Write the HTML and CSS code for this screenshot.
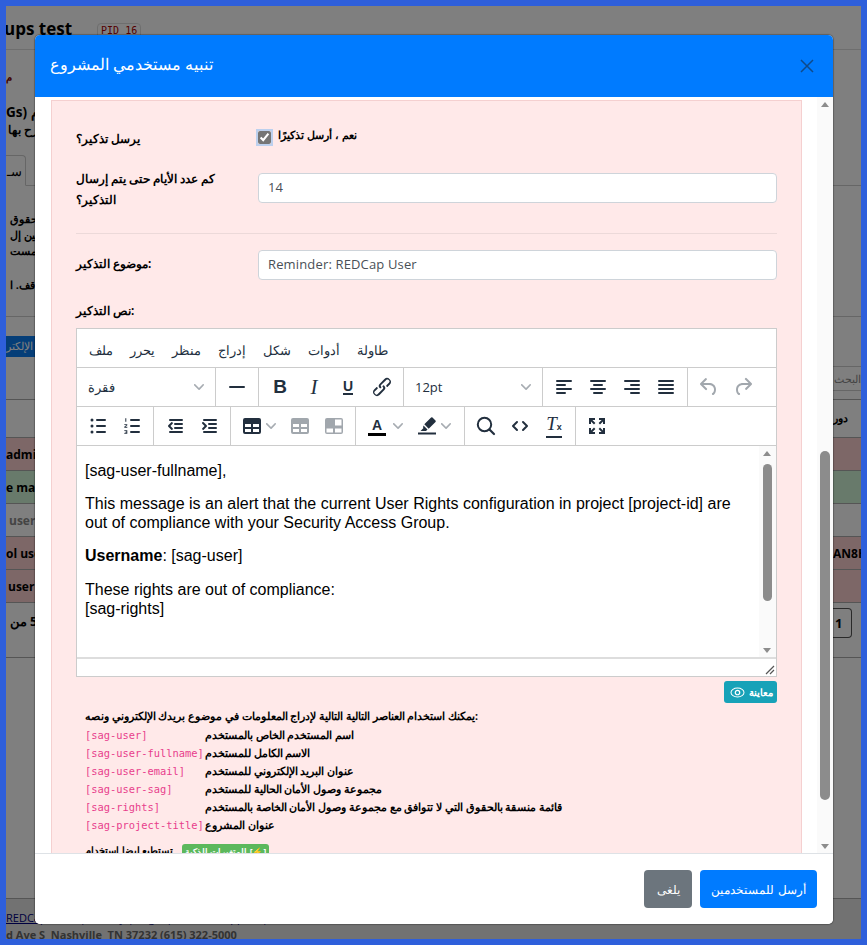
FILE: index.html
```html
<!DOCTYPE html>
<html lang="ar">
<head>
    <meta charset="UTF-8">
    <meta name="viewport" content="width=device-width, initial-scale=1.0">
    <title>Project user alert</title>
    <link rel="stylesheet" href="styles.css">
</head>
<body>
<div class="frame" dir="ltr">
    <div class="page">
        <div class="page-title"><h2>ups test</h2><span class="pid">PID 16</span></div>
        <div class="page-intro">
            <div class="mark">م</div>
            <div class="intro-head">Gs) م</div>
            <div class="intro-line">رح بها</div>
            <div class="tab">سـ</div>
        </div>
        <div class="page-desc">
            <p>حقوق</p>
            <p>مين إل</p>
            <p>للمست</p>
            <p class="desc-last">اقف. ا</p>
        </div>
        <div class="page-tools">
            <span class="mail-btn">يد الإلكتر</span>
            <span class="search-box">البحث</span>
        </div>
        <div class="grid-row grid-head"><span></span><span class="role">دور</span></div>
        <div class="grid-row row-red"><span class="cell">admin</span><span></span></div>
        <div class="grid-row row-green"><span class="cell">e man</span><span></span></div>
        <div class="grid-row"><span class="cell cell-muted">user</span><span></span></div>
        <div class="grid-row row-red"><span class="cell">ol user</span><span class="cell">AN8H</span></div>
        <div class="grid-row row-red"><span class="cell cell-in">user</span><span></span></div>
        <div class="pager"><span class="pager-count"><span>من</span><span>5</span></span><span class="pager-btn">1</span></div>
        <div class="page-footer">
            <div class="footer-links"><u>REDCap Tools</u> | <u>Privacy</u> | <u>Legal</u> | <u>Contact Support</u> | <u>About</u></div>
            <div class="footer-addr">d Ave S  Nashville  TN 37232 (615) 322-5000</div>
        </div>
    </div>

    <div class="backdrop"></div>

    <div class="modal">
        <div class="modal-header">
            <h5>تنبيه مستخدمي المشروع</h5>
            <svg class="close" width="14" height="14" viewBox="0 0 14 14"><path d="M1 1l12 12M13 1L1 13" stroke="#0f4a8a" stroke-width="1.5" fill="none"/></svg>
        </div>
        <div class="modal-body">
            <div class="panel">
                <div class="form-row row-check">
                    <label class="lbl">يرسل تذكير؟</label>
                    <div class="check-wrap"><input type="checkbox" checked><span>نعم ، أرسل تذكيرًا</span></div>
                </div>
                <div class="form-row row-days">
                    <label class="lbl lbl-two">كم عدد الأيام حتى يتم إرسال التذكير؟</label>
                    <input class="field" type="text" value="14">
                </div>
                <hr class="sep">
                <div class="form-row row-subject">
                    <label class="lbl">موضوع التذكير:</label>
                    <input class="field" type="text" value="Reminder: REDCap User">
                </div>
                <div class="lbl lbl-body">نص التذكير:</div>

                <div class="editor">
                    <div class="menubar">
                        <span>ملف</span><span>يحرر</span><span>منظر</span><span>إدراج</span><span>شكل</span><span>أدوات</span><span>طاولة</span>
                    </div>
                    <div class="toolbar">
                        <div class="tgroup"><div class="select select-block"><span>فقرة</span><svg class="chev" width="10" height="10" viewBox="0 0 10 10"><use href="#i-chev"/></svg></div></div>
                        <div class="tgroup"><div class="tbtn"><svg width="24" height="24" viewBox="0 0 24 24"><rect x="4" y="11" width="16" height="2" rx="1"/></svg></div></div>
                        <div class="tgroup">
                            <div class="tbtn"><span class="g-bold">B</span></div>
                            <div class="tbtn"><span class="g-italic">I</span></div>
                            <div class="tbtn"><span class="g-under">U</span></div>
                            <div class="tbtn"><svg width="24" height="24" viewBox="0 0 24 24"><path d="M6.2 12.3a1 1 0 0 1 1.4 1.4l-2.1 2a2 2 0 1 0 2.7 2.8l4.8-4.8a1 1 0 0 0 0-1.4 1 1 0 1 1 1.4-1.3 2.9 2.9 0 0 1 0 4L9.6 20a3.9 3.9 0 0 1-5.5-5.5l2-2zm11.6-.6a1 1 0 0 1-1.4-1.4l2-2a2 2 0 1 0-2.6-2.8L11 10a1 1 0 0 0 0 1.4A1 1 0 1 1 9.6 13a2.9 2.9 0 0 1 0-4L14.4 4a3.9 3.9 0 0 1 5.5 5.5l-2 2z"/></svg></div>
                        </div>
                        <div class="tgroup"><div class="select select-size"><span>12pt</span><svg class="chev" width="10" height="10" viewBox="0 0 10 10"><use href="#i-chev"/></svg></div></div>
                        <div class="tgroup">
                            <div class="tbtn"><svg width="24" height="24" viewBox="0 0 24 24"><path d="M5 5h14a1 1 0 0 1 0 2H5a1 1 0 1 1 0-2zm0 4h8a1 1 0 0 1 0 2H5a1 1 0 1 1 0-2zm0 8h8a1 1 0 0 1 0 2H5a1 1 0 0 1 0-2zm0-4h14a1 1 0 0 1 0 2H5a1 1 0 0 1 0-2z"/></svg></div>
                            <div class="tbtn"><svg width="24" height="24" viewBox="0 0 24 24"><path d="M5 5h14a1 1 0 0 1 0 2H5a1 1 0 1 1 0-2zm3 4h8a1 1 0 0 1 0 2H8a1 1 0 1 1 0-2zm0 8h8a1 1 0 0 1 0 2H8a1 1 0 0 1 0-2zm-3-4h14a1 1 0 0 1 0 2H5a1 1 0 0 1 0-2z"/></svg></div>
                            <div class="tbtn"><svg width="24" height="24" viewBox="0 0 24 24"><path d="M5 5h14a1 1 0 0 1 0 2H5a1 1 0 1 1 0-2zm6 4h8a1 1 0 0 1 0 2h-8a1 1 0 0 1 0-2zm0 8h8a1 1 0 0 1 0 2h-8a1 1 0 0 1 0-2zm-6-4h14a1 1 0 0 1 0 2H5a1 1 0 0 1 0-2z"/></svg></div>
                            <div class="tbtn"><svg width="24" height="24" viewBox="0 0 24 24"><path d="M5 5h14a1 1 0 0 1 0 2H5a1 1 0 1 1 0-2zm0 4h14a1 1 0 0 1 0 2H5a1 1 0 1 1 0-2zm0 4h14a1 1 0 0 1 0 2H5a1 1 0 0 1 0-2zm0 4h14a1 1 0 0 1 0 2H5a1 1 0 0 1 0-2z"/></svg></div>
                        </div>
                        <div class="tgroup tgroup-last">
                            <div class="tbtn off"><svg width="24" height="24" viewBox="0 0 24 24"><path d="M6.4 8H12c3.7 0 6.2 2 6.8 5.1.6 2.7-.4 5.6-2.3 6.8a1 1 0 0 1-1-1.8c1.1-.6 1.8-2.7 1.4-4.6-.5-2.1-2.1-3.5-4.9-3.5H6.4l3.3 3.3a1 1 0 1 1-1.4 1.4l-5-5a1 1 0 0 1 0-1.4l5-5a1 1 0 0 1 1.4 1.4L6.4 8z"/></svg></div>
                            <div class="tbtn off"><svg width="24" height="24" viewBox="0 0 24 24"><path d="M17.6 10H12c-2.8 0-4.4 1.4-4.9 3.5-.4 2 .3 4 1.4 4.6a1 1 0 1 1-1 1.8c-2-1.2-2.9-4.1-2.3-6.8.6-3 3-5.1 6.8-5.1h5.6l-3.3-3.3a1 1 0 1 1 1.4-1.4l5 5a1 1 0 0 1 0 1.4l-5 5a1 1 0 0 1-1.4-1.4l3.3-3.3z"/></svg></div>
                        </div>
                    </div>
                    <div class="toolbar">
                        <div class="tgroup">
                            <div class="tbtn"><svg width="24" height="24" viewBox="0 0 24 24"><path d="M11 5h8a1 1 0 0 1 0 2h-8a1 1 0 0 1 0-2zm0 6h8a1 1 0 0 1 0 2h-8a1 1 0 0 1 0-2zm0 6h8a1 1 0 0 1 0 2h-8a1 1 0 0 1 0-2z"/><circle cx="6" cy="6" r="1.5"/><circle cx="6" cy="12" r="1.5"/><circle cx="6" cy="18" r="1.5"/></svg></div>
                            <div class="tbtn"><svg width="24" height="24" viewBox="0 0 24 24"><path d="M11 5h8a1 1 0 0 1 0 2h-8a1 1 0 0 1 0-2zm0 6h8a1 1 0 0 1 0 2h-8a1 1 0 0 1 0-2zm0 6h8a1 1 0 0 1 0 2h-8a1 1 0 0 1 0-2z"/><path d="M5.3 4.2h1v3.6h-1zM4.3 10.200h3v1l-2 1.600h2v.9h-3v-1l2-1.600h-2zM4.300 16.200h3v3.600h-3v-.9h2v-.5h-1.500v-.7h1.500v-.6h-2z"/></svg></div>
                        </div>
                        <div class="tgroup">
                            <div class="tbtn"><svg width="24" height="24" viewBox="0 0 24 24"><path d="M7 5h12a1 1 0 0 1 0 2H7a1 1 0 1 1 0-2zm5 4h7a1 1 0 0 1 0 2h-7a1 1 0 0 1 0-2zm0 4h7a1 1 0 0 1 0 2h-7a1 1 0 0 1 0-2zm-5 4h12a1 1 0 0 1 0 2H7a1 1 0 0 1 0-2zM8.300 8.300a1 1 0 0 1 1.400 1.400L7.400 12l2.300 2.300a1 1 0 0 1-1.400 1.400l-3-3a1 1 0 0 1 0-1.400l3-3z"/></svg></div>
                            <div class="tbtn"><svg width="24" height="24" viewBox="0 0 24 24"><path d="M7 5h12a1 1 0 0 1 0 2H7a1 1 0 1 1 0-2zm5 4h7a1 1 0 0 1 0 2h-7a1 1 0 0 1 0-2zm0 4h7a1 1 0 0 1 0 2h-7a1 1 0 0 1 0-2zm-5 4h12a1 1 0 0 1 0 2H7a1 1 0 0 1 0-2zM5.300 8.300a1 1 0 0 1 1.400 0l3 3a1 1 0 0 1 0 1.400l-3 3a1 1 0 0 1-1.400-1.400L7.600 12 5.300 9.700a1 1 0 0 1 0-1.400z"/></svg></div>
                        </div>
                        <div class="tgroup">
                            <div class="tbtn tbtn-split"><svg width="24" height="24" viewBox="0 0 24 24"><path fill-rule="evenodd" d="M5 4h14a2 2 0 0 1 2 2v12a2 2 0 0 1-2 2H5a2 2 0 0 1-2-2V6a2 2 0 0 1 2-2zm0 6v3h6v-3H5zm8 0v3h6v-3h-6zm-8 5v3h6v-3H5zm8 0v3h6v-3h-6z"/></svg><svg class="chev" width="10" height="10" viewBox="0 0 10 10"><use href="#i-chev"/></svg></div>
                            <div class="tbtn off"><svg width="24" height="24" viewBox="0 0 24 24"><path fill-rule="evenodd" d="M5 4h14a2 2 0 0 1 2 2v12a2 2 0 0 1-2 2H5a2 2 0 0 1-2-2V6a2 2 0 0 1 2-2zm0 6v3h6v-3H5zm8 0v3h6v-3h-6zm-8 5v3h6v-3H5zm8 0v3h6v-3h-6z"/></svg></div>
                            <div class="tbtn off"><svg width="24" height="24" viewBox="0 0 24 24"><path fill-rule="evenodd" d="M5 4h14a2 2 0 0 1 2 2v12a2 2 0 0 1-2 2H5a2 2 0 0 1-2-2V6a2 2 0 0 1 2-2zm8 1.500v6h6.500v-6H13zm-8.500 9v4h6.500v-4H4.500zm8.500 0v4h6.500v-4H13z"/></svg></div>
                        </div>
                        <div class="tgroup">
                            <div class="tbtn tbtn-split tbtn-color"><span class="g-color">A</span><svg class="chev" width="10" height="10" viewBox="0 0 10 10"><use href="#i-chev"/></svg></div>
                            <div class="tbtn tbtn-split tbtn-color"><svg width="24" height="24" viewBox="0 0 24 24"><path d="M17.500 3.500l3 3a1 1 0 0 1 0 1.400l-6.800 6.800-4.400-4.400 6.800-6.800a1 1 0 0 1 1.400 0zM8.500 11.500l4 4-1.500 1.500H5.500l3-3-.5-.5z"/><rect x="3" y="18.500" width="18" height="2"/></svg><svg class="chev" width="10" height="10" viewBox="0 0 10 10"><use href="#i-chev"/></svg></div>
                        </div>
                        <div class="tgroup">
                            <div class="tbtn"><svg width="24" height="24" viewBox="0 0 24 24"><circle cx="10.500" cy="10.500" r="6.700" fill="none" stroke="#222f3e" stroke-width="2"/><path d="M15.500 15.500L20 20" stroke="#222f3e" stroke-width="2.200" stroke-linecap="round"/></svg></div>
                            <div class="tbtn"><svg width="24" height="24" viewBox="0 0 24 24"><path d="M9 8l-4 4 4 4M15 8l4 4-4 4" fill="none" stroke="#222f3e" stroke-width="2" stroke-linecap="round" stroke-linejoin="round"/></svg></div>
                            <div class="tbtn"><span class="g-clear">T<small>x</small></span></div>
                        </div>
                        <div class="tgroup tgroup-last">
                            <div class="tbtn"><svg width="24" height="24" viewBox="0 0 24 24"><path d="M4 4h6v2H7.400l3 3L9 10.400l-3-3V10H4zM14 4h6v6h-2V7.400l-3 3L13.600 9l3-3H14zM4 14h2v2.600l3-3 1.400 1.400-3 3H10v2H4zM13.600 15l1.400-1.400 3 3V14h2v6h-6v-2h2.600z"/></svg></div>
                        </div>
                    </div>
                    <div class="edit-area">
                        <p>[sag-user-fullname],</p>
                        <p>This message is an alert that the current User Rights configuration in project [project-id] are out of compliance with your Security Access Group.</p>
                        <p><b>Username</b>: [sag-user]</p>
                        <p>These rights are out of compliance:<br>[sag-rights]</p>
                        <div class="mini-bar">
                            <i class="arrow-up"></i>
                            <div class="mini-thumb"></div>
                            <i class="arrow-down"></i>
                        </div>
                    </div>
                    <div class="statusbar">
                        <svg width="10" height="10" viewBox="0 0 10 10"><path d="M9 1L1 9M9 5L5 9" stroke="#555" stroke-width="1.200" fill="none"/></svg>
                    </div>
                </div>

                <div class="preview-row">
                    <span class="btn-preview">
                        <svg width="15" height="13" viewBox="0 0 16 14"><ellipse cx="8" cy="7" rx="7" ry="4.800" fill="none" stroke="#fff" stroke-width="1.100"/><circle cx="8" cy="7" r="2.400" fill="none" stroke="#fff" stroke-width="1.300"/></svg>
                        <span>معاينة</span>
                    </span>
                </div>

                <div class="help-title">يمكنك استخدام العناصر التالية التالية لإدراج المعلومات في موضوع بريدك الإلكتروني ونصه:</div>
                <div class="tags">
                    <code>[sag-user]</code><span>اسم المستخدم الخاص بالمستخدم</span>
                    <code>[sag-user-fullname]</code><span>الاسم الكامل للمستخدم</span>
                    <code>[sag-user-email]</code><span>عنوان البريد الإلكتروني للمستخدم</span>
                    <code>[sag-user-sag]</code><span>مجموعة وصول الأمان الحالية للمستخدم</span>
                    <code>[sag-rights]</code><span>قائمة منسقة بالحقوق التي لا تتوافق مع مجموعة وصول الأمان الخاصة بالمستخدم</span>
                    <code>[sag-project-title]</code><span>عنوان المشروع</span>
                </div>
                <div class="smart-row"><span>تستطيع ايضا استخدام</span><span class="smart-badge">المتغيرات الذكية [⚡]</span></div>
            </div>
            <div class="body-bar">
                <i class="arrow-up"></i>
                <div class="body-thumb"></div>
                <i class="arrow-down"></i>
            </div>
        </div>
        <div class="modal-footer">
            <button class="btn btn-cancel">يلغى</button>
            <button class="btn btn-send">أرسل للمستخدمين</button>
        </div>
    </div>
</div>

<svg width="0" height="0" class="defs"><defs><path id="i-chev" d="M8.700 2.200c.3-.3.800-.3 1 0 .4.400.4.900 0 1.200L5.700 7.800c-.3.300-.9.300-1.200 0L.2 3.400a.8.800 0 0 1 0-1.200c.3-.3.800-.3 1.100 0L5 6l3.700-3.800z"/></defs></svg>
</body>
</html>
```

FILE: styles.css
```css
* {
    box-sizing: border-box;
}

html, body {
    margin: 0;
    height: 945px;
    overflow: hidden;
}

body {
    font-family: "Open Sans", "Liberation Sans", sans-serif;
    font-size: 13px;
    color: #212529;
    background-color: #2e5fdb;
}

.defs {
    position: absolute;
}

.frame {
    position: relative;
    height: 945px;
    border: 6px solid #2e5fdb;
    background-color: #fff;
    overflow: hidden;
}

/* page behind the dialog */
.page {
    height: 100%;
    display: flex;
    flex-direction: column;
}

.page-title {
    height: 44px;
    flex: none;
    display: flex;
    align-items: flex-start;
    border-bottom: 1px solid #ddd;
}

.page-title h2 {
    margin: 9px 0 0 -2px;
    font-size: 17px;
    line-height: 28px;
    font-weight: 700;
    color: #000;
}

.pid {
    margin: 17px 0 0 25px;
    padding: 0 3px;
    height: 20px;
    font-family: "DejaVu Sans Mono", monospace;
    font-size: 10px;
    line-height: 14px;
    color: #a00;
    border: 1px solid #ddd;
    border-radius: 4px;
}

.page-intro {
    height: 136px;
    flex: none;
    position: relative;
    border-bottom: 1px solid #ccc;
}

.mark {
    padding-top: 20px;
    height: 40px;
    font-size: 10px;
    font-weight: 700;
    color: #800000;
}

.intro-head {
    font-size: 13.5px;
    font-weight: 700;
    margin-top: 13px;
    color: #000;
}

.intro-line {
    font-size: 12px;
    font-weight: 700;
    margin-left: 2px;
    color: #000;
}

.tab {
    position: absolute;
    left: -10px;
    bottom: -1px;
    width: 30px;
    height: 31px;
    padding: 6px 0 0 10px;
    border: 1px solid #ccc;
    border-bottom-color: #fff;
    border-radius: 4px 4px 0 0;
    background-color: #fff;
    color: #000;
}

.page-desc {
    height: 131px;
    flex: none;
    padding-top: 25px;
    border-bottom: 1px solid #ccc;
    font-size: 11px;
    font-weight: 700;
    color: #000;
}

.page-desc p {
    margin: 0 0 0 4px;
    line-height: 16px;
    white-space: nowrap;
}

.page-desc .desc-last {
    margin-top: 18px;
}

.page-tools {
    height: 83px;
    flex: none;
    position: relative;
    padding-top: 19px;
    border-bottom: 1px solid #aaa;
}

.mail-btn {
    display: inline-block;
    height: 21px;
    width: 60px;
    font-size: 11px;
    line-height: 20px;
    color: #fff;
    background-color: #0a7cf0;
    white-space: nowrap;
    overflow: hidden;
}

.search-box {
    position: absolute;
    top: 49px;
    right: 0;
    width: 60px;
    height: 25px;
    padding-left: 6px;
    font-size: 11px;
    line-height: 23px;
    color: #888;
    border: 1px solid #ccc;
    border-right: 0;
    border-left: 0;
    text-align: right;
}

.grid-row {
    display: grid;
    grid-template-columns: 827px 1fr;
    height: 33px;
    flex: none;
    border-bottom: 1px solid #aaa;
    align-items: center;
    overflow: hidden;
}

.grid-head {
    height: 38px;
}

.role {
    font-size: 11px;
    font-weight: 700;
    color: #000;
    margin-bottom: 2px;
}

.row-red {
    background-color: #fbcfcf;
}

.row-green {
    background-color: #d0f4d6;
}

.cell {
    font-size: 12px;
    font-weight: 700;
    color: #000;
    white-space: nowrap;
}

.cell-muted {
    padding-left: 3px;
    color: #888;
}

.cell-in {
    padding-left: 2px;
}

.pager {
    height: 55px;
    flex: none;
    display: grid;
    grid-template-columns: 827px 1fr;
    align-items: start;
    border-bottom: 1px solid #aaa;
}

.pager-count {
    display: flex;
    gap: 3px;
    padding: 9px 0 0 4px;
    font-size: 13px;
    font-weight: 700;
    color: #000;
}

.pager-btn {
    width: 19px;
    height: 30px;
    margin-top: 5px;
    padding-left: 2px;
    font-weight: 700;
    font-size: 13px;
    line-height: 28px;
    border: 1px solid #555;
    border-left: 0;
    border-radius: 0 4px 4px 0;
    color: #000;
}

.page-footer {
    margin-top: 240px;
    flex: 1;
    border-top: 1px solid #aaa;
    background-color: #e4e4e4;
}

.footer-links {
    height: 25px;
    padding-top: 11px;
    font-size: 11px;
    line-height: 16px;
    white-space: nowrap;
    color: #000080;
}

.footer-addr {
    font-size: 11px;
    font-weight: 700;
    line-height: 22px;
    white-space: pre;
    color: #666;
}

.backdrop {
    position: absolute;
    inset: 0;
    background-color: rgba(0, 0, 0, 0.5);
}

/* dialog */
.modal {
    position: absolute;
    left: 29px;
    top: 29px;
    width: 798px;
    height: 889px;
    display: flex;
    flex-direction: column;
    background-color: #fff;
    border-radius: 5px;
    box-shadow: 0 0 1px 1px rgba(0, 0, 0, 0.25);
    overflow: hidden;
}

.modal-header {
    height: 62px;
    flex: none;
    display: flex;
    align-items: center;
    justify-content: space-between;
    padding: 0 19px 0 15px;
    background-color: #007bff;
}

.modal-header h5 {
    margin: 0 0 4px;
    font-size: 16px;
    font-weight: 400;
    color: #fff;
}

.modal-body {
    position: relative;
    flex: 1;
    overflow: hidden;
    padding: 3px 0 0 16px;
}

.panel {
    width: 751px;
    height: 800px;
    padding: 0 24px;
    background-color: #ffe9e9;
    border: 1px solid #f5d0d0;
}

.form-row {
    display: grid;
    grid-template-columns: 182px 519px;
}

.lbl {
    font-size: 11.5px;
    font-weight: 700;
    color: #000;
}

.row-check {
    padding-top: 29px;
    height: 67px;
    line-height: 18px;
}

.check-wrap {
    display: flex;
    align-items: flex-start;
    font-size: 11px;
    font-weight: 700;
    color: #000;
}

.check-wrap span {
    margin-top: -4px;
}

.check-wrap input {
    width: 13px;
    height: 13px;
    margin: 1px 7px 0 0;
    accent-color: #757575;
    outline: 2px solid #bcd0ee;
    outline-offset: 0;
}

.row-days {
    height: 42px;
}

.lbl-two {
    padding-right: 32px;
    line-height: 21px;
}

.row-days .field {
    margin-top: 5px;
}

.field {
    height: 30px;
    padding: 0 9px 2px;
    font-family: inherit;
    font-size: 13px;
    letter-spacing: 0.15px;
    color: #495057;
    background-color: #fff;
    border: 1px solid #ced4da;
    border-radius: 4px;
}

.sep {
    margin: 23px 0 16px;
    border: 0;
    border-top: 1px solid #ecd9d9;
}

.row-subject {
    align-items: center;
}

.row-subject .lbl {
    margin-bottom: 3px;
}

.lbl-body {
    margin-top: 20px;
    line-height: 21px;
}

/* editor */
.editor {
    margin-top: 7px;
    height: 349px;
    display: flex;
    flex-direction: column;
    background-color: #fff;
    border: 1px solid #ccc;
}

.menubar {
    height: 39px;
    flex: none;
    display: flex;
    gap: 1px;
    align-items: center;
    padding: 3px 0 0 4px;
    font-size: 13px;
    color: #222f3e;
    border-bottom: 1px solid #ccc;
}

.menubar span {
    padding: 0 8px;
}

.toolbar {
    height: 39px;
    flex: none;
    display: flex;
    border-bottom: 1px solid #ccc;
}

.tgroup {
    display: flex;
    align-items: center;
    padding: 0 4px;
    border-right: 1px solid #ccc;
}

.tgroup-last {
    border-right: 0;
}

.tbtn {
    width: 34px;
    height: 34px;
    display: flex;
    align-items: center;
    justify-content: center;
    fill: #222f3e;
    color: #222f3e;
}

.tbtn-split {
    width: 48px;
    justify-content: flex-start;
    padding-left: 5px;
    gap: 2px;
}

.tbtn-color {
    width: 50px;
}

.tbtn.off {
    opacity: 0.42;
}

.chev {
    fill: rgba(34, 47, 62, 0.4);
    flex: none;
}

.select {
    height: 34px;
    display: flex;
    align-items: center;
    justify-content: space-between;
    padding: 0 7px;
    font-size: 13px;
    color: #222f3e;
}

.select-block {
    width: 130px;
}

.select-size {
    width: 130px;
}

.g-bold {
    font-family: "Liberation Sans", sans-serif;
    font-size: 19px;
    font-weight: 700;
}

.g-italic {
    font-family: "Liberation Serif", serif;
    font-size: 21px;
    font-style: italic;
}

.g-under {
    font-family: "Liberation Sans", sans-serif;
    font-size: 14px;
    line-height: 14px;
    font-weight: 700;
    border-bottom: 2px solid #222f3e;
}

.g-color {
    width: 18px;
    margin: 0 5px 0 3px;
    font-family: "Liberation Sans", sans-serif;
    font-size: 14px;
    line-height: 16px;
    font-weight: 700;
    text-align: center;
    border-bottom: 3px solid #000;
}

.g-clear {
    font-family: "Liberation Serif", serif;
    font-size: 19px;
    line-height: 18px;
    font-style: italic;
    border-bottom: 2px solid #222f3e;
}

.g-clear small {
    font-family: "Liberation Sans", sans-serif;
    font-size: 9px;
    font-style: normal;
    font-weight: 700;
}

.edit-area {
    position: relative;
    flex: 1;
    padding: 15.5px 8px 0;
    font-family: "Liberation Sans", sans-serif;
    font-size: 16px;
    line-height: 18.2px;
    color: #000;
    border-bottom: 2px solid #ddd;
}

.edit-area p {
    margin: 0 16px 15.7px 0;
}

.mini-bar {
    position: absolute;
    top: 0;
    right: 0;
    bottom: 0;
    width: 17px;
    background-color: #fafafa;
}

.mini-thumb {
    position: absolute;
    top: 18px;
    left: 4px;
    width: 9px;
    height: 137px;
    border-radius: 5px;
    background-color: #8c8c8c;
}

.arrow-up, .arrow-down {
    position: absolute;
    width: 0;
    height: 0;
    border-left: 4px solid transparent;
    border-right: 4px solid transparent;
}

.arrow-up {
    top: 5px;
    border-bottom: 5px solid #8c8c8c;
}

.arrow-down {
    bottom: 4px;
    border-top: 5px solid #8c8c8c;
}

.mini-bar i {
    left: 4px;
}

.statusbar {
    height: 17px;
    flex: none;
    display: flex;
    justify-content: flex-end;
    align-items: flex-end;
    padding: 0 1px 1px 0;
}

.preview-row {
    display: flex;
    justify-content: flex-end;
    margin-top: 4px;
}

.btn-preview {
    display: flex;
    align-items: center;
    gap: 4px;
    height: 22px;
    width: 53px;
    padding-left: 6px;
    font-size: 10px;
    font-weight: 700;
    color: #fff;
    background-color: #17a2b8;
    border-radius: 3px;
}

.help-title {
    margin: 5px 0 0 9px;
    font-size: 10.5px;
    font-weight: 700;
    line-height: 16px;
    color: #000;
}

.tags {
    display: grid;
    grid-template-columns: 120px 1fr;
    margin: 2px 0 0 9px;
    grid-auto-rows: 18px;
    align-items: center;
    font-size: 10.5px;
    font-weight: 700;
    color: #000;
}

.tags code {
    font-family: "DejaVu Sans Mono", monospace;
    font-size: 10.4px;
    font-weight: 400;
    color: #e83e8c;
}

.smart-row {
    display: flex;
    align-items: flex-start;
    gap: 9px;
    margin: 8px 0 0 9px;
    font-size: 10px;
    font-weight: 700;
    line-height: 16px;
    color: #000;
}

.smart-badge {
    margin-top: 2px;
    padding: 0 3px;
    height: 18px;
    line-height: 16px;
    font-size: 8.5px;
    color: #fff;
    background-color: #5cb85c;
    border-radius: 3px;
}

.body-bar {
    position: absolute;
    top: 0;
    right: 0;
    bottom: 0;
    width: 16px;
    background-color: #fafafa;
}

.body-bar i {
    left: 4px;
}

.body-thumb {
    position: absolute;
    top: 354px;
    left: 3px;
    width: 10px;
    height: 349px;
    border-radius: 5px;
    background-color: #8c8c8c;
}

.modal-footer {
    height: 71px;
    flex: none;
    display: flex;
    justify-content: flex-end;
    align-items: center;
    gap: 8px;
    padding: 0 16px 0 0;
    background-color: #fff;
    border-top: 1px solid #dee2e6;
}

.btn {
    height: 38px;
    padding: 0;
    font-family: inherit;
    font-size: 12px;
    white-space: nowrap;
    color: #fff;
    border: 0;
    border-radius: 4px;
}

.btn-cancel {
    width: 48px;
    background-color: #6c757d;
}

.btn-send {
    width: 117px;
    background-color: #007bff;
}
```
